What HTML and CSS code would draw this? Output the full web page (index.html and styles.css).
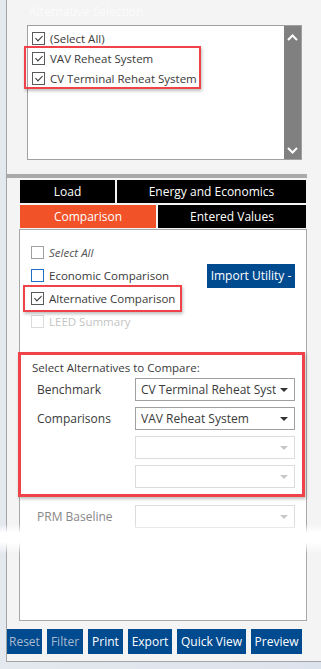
FILE: index.html
```html
<!DOCTYPE html>
<html lang="en">
<head>
  <meta charset="UTF-8" />
  <title>Alternative Selection</title>
  <link rel="stylesheet" href="styles.css">
</head>
<body>
  <div class="panel">
    <div class="section-title">Alternative Selection</div>

    <div class="listbox">
      <div class="list-items">
        <label class="check-row"><span class="box checked"></span>(Select All)</label>
        <label class="check-row"><span class="box checked"></span>VAV Reheat System</label>
        <label class="check-row"><span class="box checked"></span>CV Terminal Reheat System</label>
        <div class="highlight hl-list"></div>
      </div>
      <div class="scrollbar">
        <svg width="11" height="7" viewBox="0 0 11 7"><path d="M1 6 L5.5 1.5 L10 6" fill="none" stroke="#fff" stroke-width="2"/></svg>
        <svg width="11" height="7" viewBox="0 0 11 7"><path d="M1 1 L5.5 5.5 L10 1" fill="none" stroke="#fff" stroke-width="2"/></svg>
      </div>
    </div>

    <div class="splitter"></div>

    <div class="tabs">
      <div class="tab-row row-top">
        <div class="tab">Load</div>
        <div class="tab">Energy and Economics</div>
      </div>
      <div class="tab-row row-bottom">
        <div class="tab active">Comparison</div>
        <div class="tab">Entered Values</div>
      </div>
    </div>

    <div class="content">
      <div class="options">
        <label class="check-row italic"><span class="box muted"></span>Select All</label>
        <div class="option-line">
          <label class="check-row"><span class="box focus"></span>Economic Comparison</label>
          <button class="btn import">Import Utility -</button>
        </div>
        <label class="check-row"><span class="box checked"></span>Alternative Comparison</label>
        <label class="check-row disabled"><span class="box faint"></span>LEED Summary</label>
        <div class="highlight hl-alt"></div>
      </div>

      <div class="compare">
        <div class="compare-title">Select Alternatives to Compare:</div>
        <div class="field">
          <span class="field-label">Benchmark</span>
          <div class="select"><span class="select-text">CV Terminal Reheat System</span><span class="arrow"></span></div>
        </div>
        <div class="field">
          <span class="field-label">Comparisons</span>
          <div class="select"><span class="select-text">VAV Reheat System</span><span class="arrow"></span></div>
        </div>
        <div class="field">
          <span class="field-label"></span>
          <div class="select off"><span class="select-text"></span><span class="arrow"></span></div>
        </div>
        <div class="field">
          <span class="field-label"></span>
          <div class="select off"><span class="select-text"></span><span class="arrow"></span></div>
        </div>
        <div class="highlight hl-compare"></div>
      </div>

      <div class="field prm">
        <span class="field-label">PRM Baseline</span>
        <div class="select off"><span class="select-text"></span><span class="arrow"></span></div>
      </div>
    </div>

    <div class="toolbar">
      <button class="btn tool reset dim">Reset</button>
      <button class="btn tool filter dim">Filter</button>
      <button class="btn tool print">Print</button>
      <button class="btn tool export">Export</button>
      <button class="btn tool quick">Quick View</button>
      <button class="btn tool preview">Preview</button>
    </div>
  </div>

  <div class="fade"></div>
</body>
</html>
```

FILE: styles.css
```css
body {
  margin: 0;
  width: 321px;
  height: 669px;
  overflow: hidden;
  position: relative;
  background: linear-gradient(90deg, #e4e8ef, #dde3ec);
  font-family: "Open Sans", "Noto Sans", sans-serif;
  font-size: 11.5px;
  color: #3a3a3a;
}

.panel {
  margin-left: 6px;
  height: 662px;
  box-sizing: border-box;
  border-left: 1px solid #a4a4a4;
  border-bottom: 1px solid #a4a4a4;
  background: #f4f4f4;
  overflow: hidden;
}

.section-title {
  height: 25px;
  padding-left: 22px;
  line-height: 24px;
  font-size: 12px;
  color: #fbfbfb;
}

/* List box */
.listbox {
  display: flex;
  margin-left: 20px;
  width: 275px;
  height: 135px;
  box-sizing: border-box;
  border: 1px solid #a0a0a0;
  background: #fff;
}

.list-items {
  flex: 1;
  position: relative;
  padding: 2px 0 0 4px;
}

.scrollbar {
  width: 17px;
  background: #808080;
  display: flex;
  flex-direction: column;
  justify-content: space-between;
  align-items: center;
  padding: 8px 0 5px;
}

.check-row {
  display: flex;
  align-items: center;
  height: 20px;
  gap: 5px;
  white-space: nowrap;
}

.box {
  width: 13px;
  height: 13px;
  box-sizing: border-box;
  border: 1px solid #5a5a5a;
  background: #fff;
  position: relative;
  flex: none;
}

.box.checked::after {
  content: "";
  position: absolute;
  left: 3.5px;
  top: 1px;
  width: 3px;
  height: 6px;
  border: solid #333;
  border-width: 0 1.5px 1.5px 0;
  transform: rotate(45deg);
}

.box.muted { border-color: #a0a0a0; }
.box.focus { border-color: #1f6fc5; }
.box.faint { border-color: #dcdcdc; }

.italic { font-style: italic; color: #555; }
.disabled { color: #c4c4c4; }

.highlight {
  position: absolute;
  border: 2px solid #ef4349;
  box-shadow: 1px 2px 3px rgba(0, 0, 0, 0.25);
  pointer-events: none;
}

.hl-list { left: -4px; top: 20px; width: 173px; height: 39px; }
.hl-alt { left: 3px; top: 55px; width: 155px; height: 23px; }
.hl-compare {
  left: -2px;
  top: 0;
  bottom: 0;
  width: 287px;
  box-sizing: border-box;
  border-width: 3px;
}

.splitter {
  margin-top: 14px;
  width: 300px;
  height: 4px;
  background: #aaa;
}

/* Tabs */
.tabs {
  margin: 2px 0 0 13px;
  width: 286px;
  display: flex;
  flex-direction: column;
  gap: 2px;
}

.tab-row {
  display: grid;
  gap: 2px;
  height: 23px;
}

.row-top { grid-template-columns: 95px 1fr; }
.row-bottom { grid-template-columns: 136px 1fr; }

.tab {
  background: #000;
  color: #fff;
  font-size: 12px;
  display: flex;
  align-items: center;
  justify-content: center;
}

.tab.active { background: #f15227; }

/* Content */
.content {
  margin: 1px 0 0 12px;
  width: 288px;
  height: 392px;
  box-sizing: border-box;
  border: 1px solid #a8a8a8;
  background: #fff;
}

.options {
  position: relative;
  padding: 12px 0 0 11px;
  display: flex;
  flex-direction: column;
  gap: 2px;
}

.options .check-row,
.option-line {
  height: 21px;
}

.option-line {
  display: flex;
  align-items: center;
}

.btn {
  font-family: inherit;
  border: 0;
  background: #004a8f;
  color: #fff;
  padding: 0;
  white-space: nowrap;
}

.import {
  margin-left: auto;
  margin-right: 11px;
  width: 88px;
  height: 24px;
  font-size: 12px;
}

.compare {
  position: relative;
  margin-top: 20px;
  padding: 8px 0 3px 12px;
}

.compare-title {
  height: 16px;
  line-height: 16px;
  margin-bottom: 2px;
}

.field {
  display: flex;
  align-items: center;
  height: 23px;
  margin-bottom: 6px;
}

.field-label {
  width: 103px;
  padding-left: 5px;
  box-sizing: border-box;
  font-size: 12px;
}

.select {
  width: 160px;
  height: 23px;
  box-sizing: border-box;
  border: 1px solid #a0a0a0;
  display: flex;
  align-items: center;
  padding: 0 0 0 5px;
  overflow: hidden;
}

.select-text {
  flex: 1;
  white-space: nowrap;
  overflow: hidden;
  font-size: 12px;
}

.arrow {
  width: 0;
  height: 0;
  margin: 0 6px 0 4px;
  border-left: 4px solid transparent;
  border-right: 4px solid transparent;
  border-top: 4px solid #333;
}

.select.off { border-color: #dcdcdc; }
.select.off .arrow { border-top-color: #c8c8c8; }

.prm {
  margin: 8px 0 0 12px;
}

.prm .field-label { color: #888; }

/* Toolbar */
.toolbar {
  display: flex;
  gap: 5px;
  margin-top: 8px;
}

.tool {
  height: 25px;
  font-size: 12px;
}

.dim { color: #a9bbd0; }
.reset { width: 35px; text-align: left; padding-left: 2px; }
.filter { width: 36px; }
.print { width: 35px; }
.export { width: 44px; }
.quick { width: 69px; }
.preview { width: 51px; }

.fade {
  position: absolute;
  left: 0;
  top: 524px;
  width: 321px;
  height: 30px;
  background: linear-gradient(180deg, rgba(255,255,255,0) 0%, #fff 30%, #fff 60%, rgba(255,255,255,0) 100%);
  pointer-events: none;
}
```
